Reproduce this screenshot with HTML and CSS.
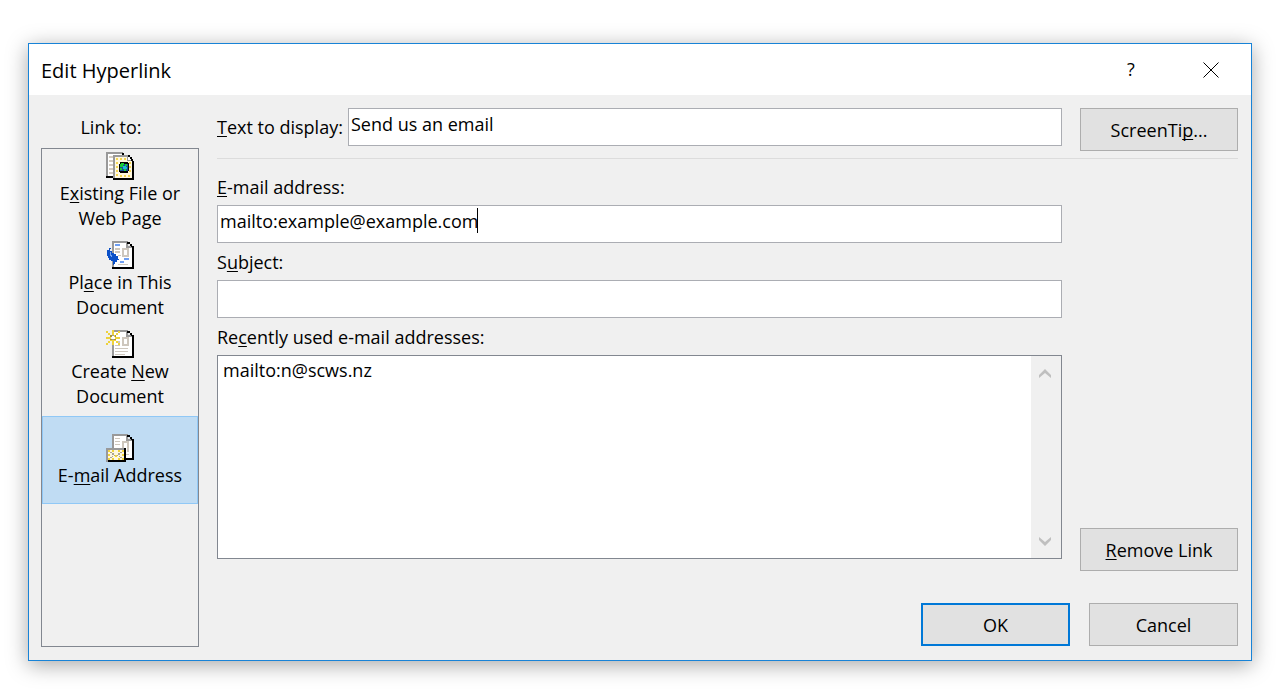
FILE: index.html
```html
<!DOCTYPE html>
<html lang="en">
<head>
<meta charset="utf-8">
<title>Edit Hyperlink</title>
<link rel="stylesheet" href="styles.css">
</head>
<body>
<form class="dialog" role="dialog" aria-labelledby="title">
  <header class="titlebar">
    <h1 class="title" id="title">Edit Hyperlink</h1>
    <button class="caption-button" type="button" aria-label="Help">?</button>
    <button class="caption-button" type="button" aria-label="Close">
      <svg width="16" height="16" viewBox="0 0 16 16"><path d="M.5.5l15 15M15.500.5l-15 15" stroke="#000" stroke-width="1" fill="none"/></svg>
    </button>
  </header>

  <div class="content">
    <nav class="sidebar" aria-labelledby="link-to">
      <div class="sidebar-label" id="link-to">Link to:</div>
      <div class="link-types">
        <button class="link-type" type="button">
          <svg class="icon" viewBox="0 0 28 28">
            <path fill="#999" d="M0 0h17v2H2v23H0z"/><path fill="#fff" d="M2 2h15v22H2z"/>
            <path fill="#d2cabf" d="M3 4h4v2H3zM3 8h4v2H3zM3 12h4v2H3zM3 16h4v2H3zM3 20h4v2H3z"/>
            <path fill="#000" d="M0 24h8v2H0zM16 1h2v3h-2z"/>
            <path fill="#999" d="M7 3h15v2H9v21H7z"/><path fill="#fff8df" d="M9 5h13v4h4v17H9z"/>
            <path fill="#f4d552" d="M10 6h2v2h-2zM14 6h2v2h-2zM18 6h2v2h-2zM10 10h2v2h-2zM10 14h2v2h-2zM10 18h2v2h-2zM10 22h2v2h-2zM14 23h2v2h-2zM18 23h2v2h-2zM22 23h2v2h-2zM23 18h2v2h-2zM23 14h2v2h-2zM23 10h2v2h-2z"/>
            <path fill="#999" d="M21 4h1v4h5v1h-6z"/><path fill="#fff" d="M22 5h1v1h1v1h1v1h-3z"/>
            <path fill="#000" d="M22 3h2v2h2v2h1v2h1v19H7v-2h19V9h-1V7h-1V5h-2zM14 10h8v1h1v8h-1v2h-8v-1h-1v-8h1z"/>
            <path fill="#174f9a" d="M14 12h8v7h-8z"/><path fill="#16cc35" d="M15 11h3v2h-1v2h-3v-3h1zM19 12h2v2h-2zM14 16h2v2h-2zM18 17h2v2h-2z"/><path fill="#1db9d8" d="M17 14h3v1h1v2h-4z"/>
          </svg>
          <span>E<u>x</u>isting File or<br>Web Page</span>
        </button>
        <button class="link-type" type="button">
          <svg class="icon" viewBox="0 0 28 28">
            <path fill="#999" d="M6 0h16v2H8v24H6z"/><path fill="#fff" d="M8 2h13v5h5v19H8z"/>
            <path fill="#6f9ff2" d="M9 3h5v2H9zM18 17h5v2h-5zM14 20h4v2h-4z"/>
            <path fill="#cec7bd" d="M9 7h5v2H9zM9 10h5v2H9zM16 7h7v9h-7zM12 14h3v1h-3zM12 23h10v1H12z"/><path fill="#fff" d="M18 9h3v5h-3z"/>
            <path fill="#999" d="M20 1h2v4h4v2h-6z"/><path fill="#e8e8e8" d="M22 3h1v1h1v1h-2z"/>
            <path fill="#000" d="M21 1h3v2h2v2h2v23H6v-2h20V6h-1V5h-1V3h-3z"/>
            <path fill="#0a50c8" d="M3 7h2v1H4v2h2v2h2v1h2v2h2v3h1v1h-2v2H9v2H8v1H7v-4H5v-1H3v-2H2v-2H1V9h2z"/><path fill="#74a5f2" d="M4 11h1v3h1v2H5v-1H4z"/>
          </svg>
          <span>Pl<u>a</u>ce in This<br>Document</span>
        </button>
        <button class="link-type" type="button">
          <svg class="icon" viewBox="0 0 28 28">
            <path fill="#999" d="M6 0h16v2H8v24H6z"/><path fill="#fff" d="M8 2h13v5h5v19H8z"/>
            <path fill="#cec7bd" d="M16 7h7v9h-7zM10 11h4v2h-4zM9 15h5v1H9zM9 18h13v1H9zM9 21h13v1H9zM9 24h10v1H9z"/><path fill="#fff" d="M18 9h3v5h-3z"/>
            <path fill="#999" d="M20 1h2v4h4v2h-6z"/><path fill="#e8e8e8" d="M22 3h1v1h1v1h-2z"/>
            <path fill="#000" d="M21 1h3v2h2v2h2v23H6v-2h20V6h-1V5h-1V3h-3z"/>
            <path fill="#edd23c" d="M6 0h2v5H6zM0 1h2v2h2v2h2v2H4V5H2V3H0zM12 1h2v2h-2v2h-2v2H8V5h2V3h2zM0 7h5v2H0zM9 7h5v2H9zM4 9h2v2H4v2H2v2H0v-2h2v-2h2zM8 9h2v2h2v2h2v2h-2v-2h-2v-2H8zM6 10h2v5H6z"/>
            <path fill="#a79432" d="M4 5h2v2H4zM9 5h1v2H9zM4 9h2v1H4zM8 9h2v1H8z"/><path fill="#fff" d="M6 6h2v3H6z"/>
          </svg>
          <span>Create <u>N</u>ew<br>Document</span>
        </button>
        <button class="link-type link-type-selected" type="button" aria-current="true">
          <svg class="icon" viewBox="0 0 28 28">
            <path fill="#999" d="M6 0h16v2H8v22H6z"/><path fill="#fff" d="M8 2h13v5h5v18H8z"/>
            <path fill="#cec7bd" d="M9 4h5v1H9zM9 7h5v1H9zM9 10h5v1H9zM16 7h7v2h-7zM16 7h2v9h-2zM21 9h2v9h-2zM20 20h3v1h-3z"/>
            <path fill="#999" d="M20 1h2v4h4v2h-6z"/><path fill="#e8e8e8" d="M22 3h1v1h1v1h-2z"/>
            <path fill="#000" d="M21 1h3v2h2v2h2v21H18v-2h8V6h-1V5h-1V3h-3z"/>
            <path fill="#999" d="M0 14h20v2H2v12H0z"/><path fill="#fff8df" d="M2 16h16v10H2z"/>
            <path fill="#f1d33a" d="M2 16h2v2H2zM6 16h2v2H6zM12 16h2v2h-2zM16 16h2v2h-2zM2 20h2v2H2zM16 20h2v2h-2zM2 24h2v2H2zM6 24h2v2H6zM12 24h2v2h-2zM16 24h2v2h-2zM9 21h2v2H9z"/>
            <path fill="#aaa394" d="M4 18h2v1H4zM6 19h2v2H6zM8 21h1v1H8zM11 21h1v1h-1zM12 19h2v2h-2zM14 18h2v1h-2zM6 22h1v1H6zM4 23h2v1H4zM13 22h1v1h-1zM14 23h2v1h-2z"/>
            <path fill="#000" d="M18 14h2v14H2v-2h16z"/>
          </svg>
          <span>E-<u>m</u>ail Address</span>
        </button>
      </div>
    </nav>

    <main class="main">
      <div class="display-row">
        <label class="label" for="display"><u>T</u>ext to display:</label>
        <input class="field display-field" id="display" type="text" value="Send us an email">
        <button class="button side-button" type="button">ScreenTi<u>p</u>...</button>
      </div>
      <div class="details">
        <div class="fields">
          <label class="label" for="email"><u>E</u>-mail address:</label>
          <div class="caret-field">
            <input class="field" id="email" type="text" value="mailto:example@example.com">
            <span class="caret"></span>
          </div>
          <label class="label" for="subject">S<u>u</u>bject:</label>
          <input class="field" id="subject" type="text">
          <label class="label" for="recent">Re<u>c</u>ently used e-mail addresses:</label>
          <div class="listbox">
            <select class="recent" id="recent" size="2"><option>mailto:n@scws.nz</option></select>
            <div class="scrollbar">
              <button class="scroll-button" type="button" aria-label="Scroll up" disabled><svg width="12" height="9" viewBox="0 0 12 9"><path d="M0 6l6-6 6 6v3L6 4 0 9z" fill="#bfbfbf"/></svg></button>
              <button class="scroll-button" type="button" aria-label="Scroll down" disabled><svg width="12" height="9" viewBox="0 0 12 9"><path d="M0 0l6 5 6-5v3L6 9 0 3z" fill="#bfbfbf"/></svg></button>
            </div>
          </div>
        </div>
        <button class="button side-button remove-button" type="button"><u>R</u>emove Link</button>
      </div>
      <footer class="actions">
        <button class="button action button-default" type="submit">OK</button>
        <button class="button action" type="button">Cancel</button>
      </footer>
    </main>
  </div>
</form>
</body>
</html>
```
FILE: styles.css
```css
*,
*::before,
*::after {
  box-sizing: border-box;
}

body {
  display: flex;
  min-height: 100vh;
  margin: 0;
  padding: 43px 33px 38px 28px;
  background: #fff;
  color: #000;
  font: 18px/25px "Open Sans", "Noto Sans", sans-serif;
}

button,
input,
select {
  margin: 0;
  color: inherit;
  font: inherit;
}

u {
  text-underline-offset: 2px;
  text-decoration-thickness: 1px;
  text-decoration-skip-ink: none;
}

.dialog {
  display: flex;
  flex: 1;
  flex-direction: column;
  border: 1px solid #1883d7;
  background: #f0f0f0;
  box-shadow: 0 4px 20px rgba(0, 0, 0, 0.35);
}

.titlebar {
  display: flex;
  align-items: center;
  height: 51px;
  padding: 0 0 0 12px;
  background: #fff;
}

.title {
  flex: 1;
  margin: 0;
  padding-top: 2px;
  font-size: 20px;
  font-weight: 400;
}

.caption-button {
  display: flex;
  align-items: center;
  justify-content: center;
  width: 80px;
  height: 51px;
  padding: 0;
  border: 0;
  background: transparent;
}

.content {
  display: flex;
  flex: 1;
  gap: 18px;
  padding: 13px 13px 13px 12px;
}

.sidebar {
  display: flex;
  flex-direction: column;
  width: 158px;
}

.sidebar-label {
  padding: 7px 18px 8px 0;
  text-align: center;
}

.link-types {
  flex: 1;
  border: 1px solid #828790;
}

.link-type {
  display: flex;
  flex-direction: column;
  align-items: center;
  gap: 1px;
  width: 100%;
  height: 89px;
  padding: 3px 0 0;
  border: 0;
  background: transparent;
  white-space: nowrap;
}

.link-type-selected {
  justify-content: center;
  height: 88px;
  padding: 2px 0 0;
  border: 1px solid #90c8f6;
  background: #c0dcf3;
}

.icon {
  width: 28px;
  height: 28px;
  shape-rendering: crispEdges;
}

.main {
  display: flex;
  flex: 1;
  flex-direction: column;
  padding-bottom: 1px;
}

.display-row {
  display: flex;
  align-items: flex-start;
  height: 51px;
  border-bottom: 1px solid #dcdcdc;
}

.display-row .label {
  width: 131px;
  padding-top: 7px;
  white-space: nowrap;
}

.field {
  width: 100%;
  height: 38px;
  padding: 0 2px 7px;
  border: 1px solid #abadb3;
  border-radius: 0;
  outline: 0;
  background: #fff;
}

.display-field {
  flex: 1;
  margin-right: 18px;
}

.button {
  height: 43px;
  padding: 2px 0 0;
  border: 1px solid #adadad;
  background: #e1e1e1;
}

.side-button {
  width: 158px;
}

.details {
  display: flex;
  flex: 1;
  gap: 18px;
}

.fields {
  display: flex;
  flex: 1;
  flex-direction: column;
  padding: 16px 0 12px;
}

.fields .label {
  padding-bottom: 5px;
}

.fields .field + .label,
.caret-field + .label {
  padding-top: 7px;
}

.caret-field {
  position: relative;
  display: flex;
}

.caret {
  position: absolute;
  top: 3px;
  left: 260px;
  width: 1px;
  height: 25px;
  background: #000;
}

.listbox {
  display: flex;
  flex: 1;
  border: 1px solid #828790;
  background: #fff;
}

.recent {
  flex: 1;
  padding: 2px 3px;
  border: 0;
  outline: 0;
  background: #fff;
  overflow: hidden;
}

.recent option {
  padding: 0 2px;
}

.scrollbar {
  display: flex;
  flex-direction: column;
  justify-content: space-between;
  width: 30px;
  background: #f0f0f0;
}

.scroll-button {
  display: flex;
  align-items: center;
  justify-content: center;
  height: 34px;
  padding: 0 2px 0 0;
  border: 0;
  background: transparent;
}

.remove-button {
  align-self: flex-end;
}

.actions {
  display: flex;
  justify-content: flex-end;
  gap: 19px;
  padding-top: 32px;
}

.action {
  width: 149px;
}

.button-default {
  border: 2px solid #0078d7;
}
```
